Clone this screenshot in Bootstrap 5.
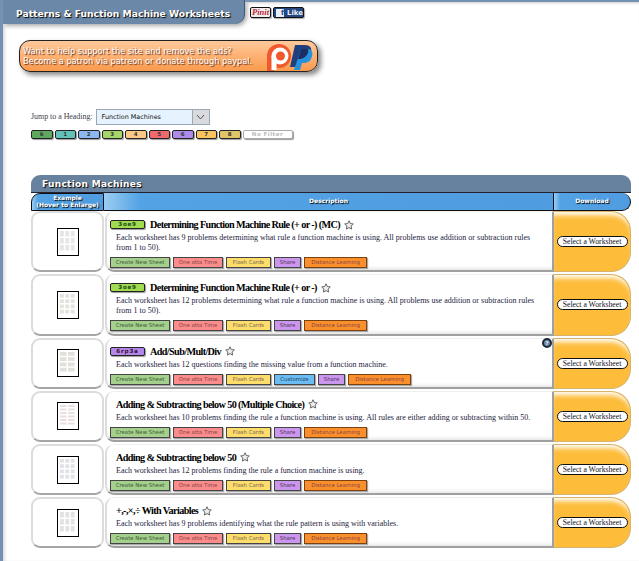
<!DOCTYPE html>
<html lang="en">
  <head>
    <meta charset="UTF-8" />
    <meta name="viewport" content="width=device-width, initial-scale=1.0" />
    <title>Patterns &amp; Function Machine Worksheets</title>
    <link
      href="https://cdn.jsdelivr.net/npm/bootstrap@5.3.2/dist/css/bootstrap.min.css"
      rel="stylesheet"
    />
    <style>
      body {
        background: #fff;
        font-family: "Liberation Serif", serif;
        color: #000;
        overflow: hidden;
      }
      .page-frame {
        height: 561px;
        border-left: 3px solid #7391b3;
        box-shadow: inset 3px 0 3px -1px #ddd;
      }
      .top-bar {
        height: 24px;
        border-top: 2px solid #7391b3;
        box-shadow: inset 0 3px 3px -2px #ccc;
      }
      .title-tab {
        width: 242px;
        height: 24px;
        margin-top: -2px;
        background: #6b88a8;
        border-right: 1px solid #3f5874;
        border-bottom-right-radius: 10px;
        box-shadow: 2px 2px 4px #aaa;
        color: #fff;
        font: bold 9.2px "DejaVu Sans", sans-serif;
        text-shadow: 1px 1px 1px #000;
        padding: 8px 0 0 13px;
        white-space: nowrap;
      }
      .social-btn {
        height: 11px;
        border: 1px solid #111;
        border-radius: 2px;
        font: bold 7px/9px "DejaVu Sans", sans-serif;
        margin-top: 5px;
        box-shadow: 1px 1px 1px #aaa;
      }
      .pin-btn {
        width: 21px;
        background: #f3eeee;
        color: #b5263a;
        font-family: "Liberation Serif", serif;
        font-style: italic;
        font-size: 8.5px;
        text-align: center;
        margin-left: 5px;
        overflow: hidden;
      }
      .like-btn {
        width: 31px;
        background: #24477f;
        color: #e8eefc;
        margin-left: 2px;
        padding: 1px 0 0 2px;
      }
      .like-f {
        width: 8px;
        height: 8px;
        background: #e8eefc;
        color: #24477f;
        margin-right: 3px;
        font-weight: bold;
        text-align: right;
        line-height: 9px;
      }
      .patron-box {
        width: 299px;
        height: 32px;
        margin: 16px 0 0 16px;
        background: linear-gradient(#ffc99b, #fb9a4c);
        border: 1px solid #222;
        border-radius: 11px;
        box-shadow: 3px 3px 5px #888;
        padding: 5px 0 0 3px;
        color: #fff;
        font: 8.2px/10.2px "DejaVu Sans", sans-serif;
        text-shadow: 1px 1px 1px #5a2a1a;
        white-space: nowrap;
      }
      .patron-box svg {
        margin: -2px 1px 0 0;
      }
      .jump-line {
        margin: 37px 0 0 28px;
        height: 16px;
        font-size: 7.9px;
        color: #3d3a4a;
      }
      .jump-select {
        width: 114px;
        height: 16px;
        margin-left: 3px;
        border: 1px solid #9aa7b5;
        background: #e6f2fd;
        color: #111;
        font: 6.4px/14px "DejaVu Sans", sans-serif;
        padding-left: 5px;
        position: relative;
      }
      .jump-arrow {
        position: absolute;
        right: 0;
        top: 0;
        width: 17px;
        height: 14px;
        background: #d8dade;
        border-left: 1px solid #9aa7b5;
      }
      .grade-row {
        margin: 5px 0 0 28px;
        gap: 2px;
      }
      .grade-pill {
        width: 21.5px;
        height: 9px;
        border: 1px solid #222;
        border-radius: 2px;
        font: bold 5.5px/7px "DejaVu Sans", sans-serif;
        text-align: center;
        box-shadow: 1px 1px 1px #999;
        color: #333;
      }
      .grade-none {
        width: 50px;
        border-color: #aaa;
        background: #fff;
        color: #bbb;
        letter-spacing: 0.5px;
      }
      .sheet-wrap {
        width: 600px;
        margin: 36px 0 0 28px;
      }
      .section-head {
        height: 18px;
        background: #67829f;
        border-radius: 9px 9px 0 0;
        border-bottom: 1px solid #223;
        color: #fff;
        font: bold 9px/18px "DejaVu Sans", sans-serif;
        letter-spacing: 0.3px;
        text-shadow: 1px 1px 1px #000;
        padding-left: 11px;
      }
      .col-heads {
        height: 18px;
      }
      .col-head {
        background: linear-gradient(90deg, #9ccdf2, #53a3e4 8%, #4f9ce0);
        color: #fff;
        font: bold 6px/7px "DejaVu Sans", sans-serif;
        text-shadow: 1px 1px 1px #000;
        text-align: center;
        border: 1px solid #111;
        border-top: 0;
        border-left: 0;
      }
      .head-ex {
        width: 73px;
        border-left: 1px solid #111;
        border-top-left-radius: 9px;
        border-top: 1px solid #111;
      }
      .head-desc {
        width: 450px;
        line-height: 16px;
      }
      .head-dl {
        width: 77px;
        line-height: 16px;
        border-radius: 0 9px 9px 0;
      }
      .sheet-row {
        margin-bottom: 2px;
      }
      .h-tall {
        height: 61.3px;
      }
      .h-std {
        height: 51.2px;
      }
      .ex-cell {
        width: 73px;
        border: 2px solid #dcdcdc;
        border-bottom-color: #a6a6a6;
        border-radius: 9px;
      }
      .thumb-box {
        display: block;
        width: 22px;
        height: 28px;
        border: 1px solid #000;
        background: #fff;
      }
      .desc-cell {
        width: 449px;
        margin-left: 1px;
        border: 1px solid #f0f0f0;
        border-left: 2px solid #ddd;
        border-bottom: 2px solid #a0a0a0;
        border-right: 2px solid #a0a0a0;
        border-radius: 9px 0 0 9px;
        box-shadow: inset 0 -4px 4px -3px #ddd;
        padding: 4px 0 0 3px;
        position: relative;
      }
      .title-line {
        height: 17px;
        font-size: 10.2px;
        font-weight: bold;
        letter-spacing: -0.62px;
        line-height: 17px;
        white-space: nowrap;
      }
      .title-line .plain-title {
        margin-left: 6px;
      }
      .level-tag {
        width: 35px;
        height: 9px;
        border: 1px solid #222;
        border-radius: 2px;
        font: bold 5.6px/7px "DejaVu Sans", sans-serif;
        letter-spacing: 0.8px;
        text-align: center;
        margin: 0 5px 0 0;
        box-shadow: 1px 1px 1px #999;
        color: #242;
      }
      .tag-green {
        background: #9fdc4e;
      }
      .tag-purple {
        background: #b586ea;
        color: #313;
      }
      .star-icon {
        margin-left: 4px;
      }
      .desc-text {
        font-size: 8px;
        line-height: 10px;
        margin: 0 0 0 6px;
        color: #1c1c40;
        padding-right: 6px;
      }
      .desc-text.one-line {
        height: 10px;
      }
      .desc-text.two-line {
        height: 20px;
      }
      .act-row {
        gap: 3px;
        margin-top: 4px;
      }
      .act-btn {
        height: 11px;
        border: 1px solid #444;
        font: 5.4px/9px "DejaVu Sans", sans-serif;
        text-align: center;
        box-shadow: 1px 1px 1px #aaa;
        color: #555;
        white-space: nowrap;
      }
      .act-new { width: 60px; background: #a4cf8d; color: #3c5c30; }
      .act-one { width: 50px; background: #fb8c8c; color: #844; }
      .act-flash { width: 45px; background: #fedd6b; color: #765; }
      .act-share { width: 27px; background: #ca96ee; color: #535; }
      .act-custom { width: 41px; background: #6bbcf2; color: #246; }
      .act-dist { width: 63px; background: #fb8f2c; border-color: #7a4210; color: #844; }
      .help-dot {
        position: absolute;
        right: 0;
        top: -1px;
        width: 10px;
        height: 10px;
        border-radius: 50%;
        background: #6b88a8;
        border: 2px solid #1c2b3a;
        color: #fff;
        font: bold 5px/6px "DejaVu Sans", sans-serif;
        text-align: center;
        letter-spacing: 0;
      }
      .dl-cell {
        width: 77px;
        border-right: 1px solid #d8b36c;
        border-top: 1px solid #d8b36c;
        border-bottom: 1px solid #d8b36c;
        border-radius: 0 20px 20px 0;
        background: #fdbd3b;
        box-shadow: inset 0 6px 5px -3px #fff;
      }
      .pick-btn {
        width: 71px;
        height: 11px;
        background: #fff;
        border: 1px solid #111;
        border-radius: 6px;
        font-size: 7.7px;
        line-height: 9px;
        text-align: center;
        white-space: nowrap;
        color: #112;
      }
    </style>
  </head>
  <body>
    <div class="page-frame">
      <div class="top-bar d-flex align-items-start">
        <div class="title-tab">Patterns &amp; Function Machine Worksheets</div>
        <div class="social-btn pin-btn">Pinit</div>
        <div class="social-btn like-btn d-flex"><span class="like-f">f</span>Like</div>
      </div>

      <div class="patron-box d-flex justify-content-between">
        <div>Want to help support the site and remove the ads?<br />Become a patron via patreon or donate through paypal.</div>
        <svg width="50" height="27" viewBox="0 0 50 27">
          <circle cx="13" cy="12" r="12" fill="#f0582e" />
          <rect x="1" y="12" width="7" height="15" fill="#f0582e" />
          <circle cx="14" cy="12" r="8.5" fill="#fff" />
          <rect x="5.5" y="12" width="5" height="14" fill="#fff" />
          <circle cx="14.5" cy="12" r="4.5" fill="#f0582e" />
          <path d="M29 1h10c5 0 7 3 6 7-1 5-4 7-9 7h-3l-2 8h-7z" fill="#1f3f7f" />
          <path d="M35 5h8c3 1 4 4 3 7-1 5-4 7-8 7h-2l-2 7h-6z" fill="#2492dc" />
          <path d="M35 5h7c1 3-1 9-8 10h-2z" fill="#1b2f66" />
        </svg>
      </div>

      <div class="jump-line d-flex align-items-center">
        Jump to a Heading:
        <div class="jump-select">
          Function Machines
          <span class="jump-arrow d-flex align-items-center justify-content-center">
            <svg width="9" height="6" viewBox="0 0 9 6"><path d="M1 1l3.5 4L8 1" fill="none" stroke="#555" /></svg>
          </span>
        </div>
      </div>

      <div class="grade-row d-flex" id="gradeRow"></div>

      <div class="sheet-wrap">
        <div class="section-head">Function Machines</div>
        <div class="col-heads d-flex">
          <div class="col-head head-ex">Example<br />(Hover to Enlarge)</div>
          <div class="col-head head-desc">Description</div>
          <div class="col-head head-dl">Download</div>
        </div>
        <div id="sheetRows"></div>
      </div>
    </div>

    <script src="https://cdn.jsdelivr.net/npm/bootstrap@5.3.2/dist/js/bootstrap.bundle.min.js"></script>
    <script>
      const star = '<svg class="star-icon" width="10" height="10" viewBox="0 0 20 20"><path d="M10 1.5l2.6 5.6 6 .8-4.4 4.2 1.1 6L10 15.2l-5.3 2.9 1.1-6L1.4 7.9l6-.8z" fill="#eee" stroke="#666" stroke-width="2"/></svg>';

      // tiny worksheet preview: a grid of pale problem blocks
      function thumb(cols, rowCount, fill) {
        let blocks = "";
        const cw = 16 / cols;
        const ch = 21 / rowCount;
        for (let r = 0; r < rowCount; r++) {
          for (let c = 0; c < cols; c++) {
            blocks += `<rect x="${2 + c * cw}" y="${2 + r * ch}" width="${cw - 1.5}" height="${ch - 1.5}" fill="${fill}"/>`;
          }
        }
        return `<svg class="thumb-box" viewBox="0 0 20 26">${blocks}</svg>`;
      }

      const grades = [
        ["k", "#5fa85f"], ["1", "#62c2b8"], ["2", "#8db8ef"], ["3", "#a5d66a"], ["4", "#fbc987"],
        ["5", "#ee6a6f"], ["6", "#ae8be8"], ["7", "#fbc45f"], ["8", "#dfc46a"],
      ];
      const gradeRow = document.getElementById("gradeRow");
      grades.forEach(([label, color]) => {
        const pill = document.createElement("div");
        pill.className = "grade-pill";
        pill.style.backgroundColor = color;
        pill.textContent = label;
        gradeRow.appendChild(pill);
      });
      gradeRow.insertAdjacentHTML("beforeend", '<div class="grade-pill grade-none">No Filter</div>');

      const rows = [
        { tag: "3oe9", tagClass: "tag-green", title: "Determining Function Machine Rule (+ or -) (MC)", h: "h-tall", lines: "two-line", grid: [3, 3, "#e6e6e6"],
          text: "Each worksheet has 9 problems determining what rule a function machine is using. All problems use addition or subtraction rules from 1 to 50)." },
        { tag: "3oe9", tagClass: "tag-green", title: "Determining Function Machine Rule (+ or -)", h: "h-tall", lines: "two-line", grid: [3, 4, "#e4e2dc"],
          text: "Each worksheet has 12 problems determining what rule a function machine is using. All problems use addition or subtraction rules from 1 to 50)." },
        { tag: "6rp3a", tagClass: "tag-purple", title: "Add/Sub/Mult/Div", h: "h-std", lines: "one-line", grid: [2, 4, "#e2e0da"], custom: true, help: true,
          text: "Each worksheet has 12 questions finding the missing value from a function machine." },
        { title: "Adding &amp; Subtracting below 50 (Multiple Choice)", h: "h-std", lines: "one-line", grid: [2, 6, "#eadfdf"],
          text: "Each worksheet has 10 problems finding the rule a function machine is using. All rules are either adding or subtracting within 50." },
        { title: "Adding &amp; Subtracting below 50", h: "h-std", lines: "one-line", grid: [3, 4, "#dfe2e6"],
          text: "Each worksheet has 12 problems finding the rule a function machine is using." },
        { title: "+,-,×,÷ With Variables", h: "h-std", lines: "one-line", grid: [3, 3, "#e2e2e2"],
          text: "Each worksheet has 9 problems identifying what the rule pattern is using with variables." },
      ];

      const sheetRows = document.getElementById("sheetRows");
      rows.forEach((r) => {
        const tag = r.tag ? `<span class="level-tag ${r.tagClass}">${r.tag}</span>` : "";
        sheetRows.insertAdjacentHTML("beforeend", `
          <div class="sheet-row d-flex ${r.h}">
            <div class="ex-cell d-flex align-items-center justify-content-center">
              ${thumb(...r.grid)}
            </div>
            <div class="desc-cell">
              ${r.help ? '<span class="help-dot">?</span>' : ""}
              <div class="title-line d-flex align-items-center">
                ${tag}<span class="${r.tag ? "" : "plain-title"}">${r.title}</span>${star}
              </div>
              <p class="desc-text ${r.lines}">${r.text}</p>
              <div class="act-row d-flex">
                <div class="act-btn act-new">Create New Sheet</div>
                <div class="act-btn act-one">One atta Time</div>
                <div class="act-btn act-flash">Flash Cards</div>
                ${r.custom ? '<div class="act-btn act-custom">Customize</div>' : ""}
                <div class="act-btn act-share">Share</div>
                <div class="act-btn act-dist">Distance Learning</div>
              </div>
            </div>
            <div class="dl-cell d-flex align-items-center justify-content-center">
              <div class="pick-btn">Select a Worksheet</div>
            </div>
          </div>`);
      });
    </script>
  </body>
</html>
